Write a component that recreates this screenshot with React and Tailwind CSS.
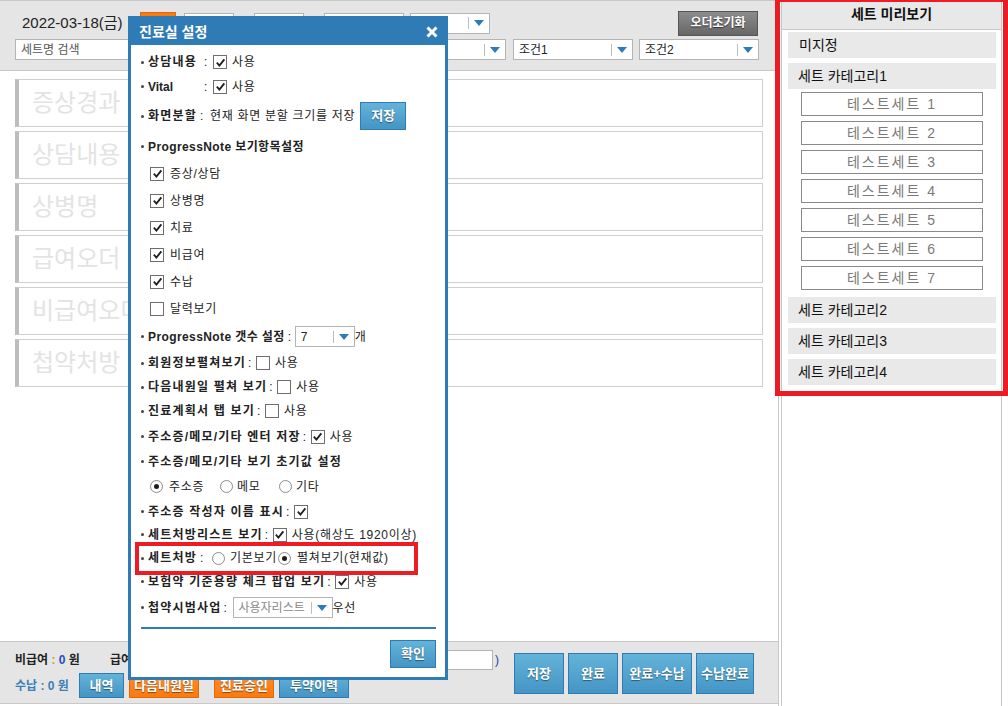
import React from 'react';

const Arrow = () => (
  <svg viewBox="0 0 10 6" className="h-[6px] w-[10px]">
    <polygon points="0,0 10,0 5,6" fill="#2f7bb5" />
  </svg>
);

const Select = ({ text, className = '', textClass = 'text-[#222]' }) => (
  <div className={`flex items-center border border-[#b4b4b4] bg-white ${className}`}>
    <span className={`flex-1 truncate pl-[5px] text-[12px] ${textClass}`}>{text}</span>
    <span className="h-[12px] w-px bg-[#bdbdbd]" />
    <span className="flex w-[20px] justify-center"><Arrow /></span>
  </div>
);

const Check = ({ on }) => (
  <span className="inline-flex h-[14px] w-[14px] shrink-0 items-center justify-center border border-[#6e6e6e] bg-white">
    {on && (
      <svg viewBox="0 0 12 12" className="h-[11px] w-[11px]">
        <path d="M2 6.2 L4.8 9.3 L10.2 2.6" fill="none" stroke="#1e1e1e" strokeWidth="2" />
      </svg>
    )}
  </span>
);

const Radio = ({ on }) => (
  <span className="inline-flex h-[13px] w-[13px] shrink-0 items-center justify-center rounded-full border border-[#8c8c8c] bg-white">
    {on && <span className="h-[5px] w-[5px] rounded-full bg-[#1e1e1e]" />}
  </span>
);

const Dot = () => <span className="mr-[4px] h-[3px] w-[3px] shrink-0 rounded-full bg-[#444]" />;

const Row = ({ h, children, className = '' }) => (
  <div className={`flex items-center text-[12px] tracking-[0.7px] text-[#222] ${className}`} style={{ height: h }}>
    {children}
  </div>
);

// bold Korean label
const L = ({ children, className = '' }) => (
  <span className={`font-bold tracking-[1.2px] ${className}`}>{children}</span>
);

const Colon = ({ className = 'ml-[2px] mr-[4px]' }) => <span className={className}>:</span>;

const blueBtn =
  'flex items-center justify-center border border-[#2f7bb5] bg-linear-to-b from-[#63b3d9] to-[#4595c5] font-bold tracking-normal text-white [text-shadow:0_1px_1px_rgba(0,0,0,0.45)]';
const orangeBtn =
  'flex items-center justify-center border border-[#e26a00] bg-linear-to-b from-[#ff8b2a] to-[#fb7a10] font-bold text-white [text-shadow:0_1px_1px_rgba(0,0,0,0.45)]';

const contentRows = ['증상경과', '상담내용', '상병명', '급여오더', '비급여오더', '첩약처방'];
const sets = [1, 2, 3, 4, 5, 6, 7];

function Dialog() {
  return (
    <div className="absolute left-[128px] top-[16px] flex h-[664px] w-[320px] flex-col border-[3px] border-[#2f7bb5] bg-white">
      <div className="flex h-[26px] items-center justify-between bg-[#2f7bb5] pl-[8px] pr-[7px]">
        <span className="text-[14px] font-bold text-white">진료실 설정</span>
        <svg viewBox="0 0 12 12" className="h-[12px] w-[12px]">
          <path d="M1.5 1.5 L10.5 10.5 M10.5 1.5 L1.5 10.5" stroke="#fff" strokeWidth="3" />
        </svg>
      </div>
      <div className="flex flex-col pl-[10px] pr-[9px] pt-[5px]">
        <Row h={24}>
          <Dot />
          <L className="w-[56px]">상담내용</L>
          <Colon className="mr-[5px]" />
          <Check on />
          <span className="ml-[5px]">사용</span>
        </Row>
        <Row h={25}>
          <Dot />
          <span className="w-[56px] font-bold tracking-normal">Vital</span>
          <Colon className="mr-[5px]" />
          <Check on />
          <span className="ml-[5px]">사용</span>
        </Row>
        <Row h={34}>
          <Dot />
          <L>화면분할</L>
          <Colon className="ml-[3px] mr-[6px]" />
          <span>현재 화면 분할 크기를 저장</span>
          <button className={`${blueBtn} ml-[5px] h-[28px] w-[46px] text-[13px]`}>저장</button>
        </Row>
        <Row h={27}>
          <Dot />
          <span className="font-bold tracking-[0.4px]">ProgressNote 보기항목설정</span>
        </Row>
        {[
          ['증상/상담', true],
          ['상병명', true],
          ['치료', true],
          ['비급여', true],
          ['수납', true],
          ['달력보기', false],
        ].map(([t, on]) => (
          <Row h={27} key={t} className="pl-[9px]">
            <Check on={on} />
            <span className="ml-[6px]">{t}</span>
          </Row>
        ))}
        <Row h={29}>
          <Dot />
          <span className="font-bold tracking-[0.4px]">ProgressNote 갯수 설정</span>
          <Colon className="ml-[3px] mr-[3px]" />
          <Select text="7" className="h-[21px] w-[60px]" />
          <span>개</span>
        </Row>
        {['회원정보펼쳐보기', '다음내원일 펼쳐 보기', '진료계획서 탭 보기'].map((t) => (
          <Row h={24} key={t}>
            <Dot />
            <L>{t}</L>
            <Colon />
            <Check />
            <span className="ml-[5px]">사용</span>
          </Row>
        ))}
        <Row h={27}>
          <Dot />
          <L>주소증/메모/기타 엔터 저장</L>
          <Colon />
          <Check on />
          <span className="ml-[5px]">사용</span>
        </Row>
        <Row h={23}>
          <Dot />
          <L>주소증/메모/기타 보기 초기값 설정</L>
        </Row>
        <Row h={27} className="pl-[9px]">
          <Radio on />
          <span className="ml-[6px] w-[51px]">주소증</span>
          <Radio />
          <span className="ml-[4px] w-[42px]">메모</span>
          <Radio />
          <span className="ml-[4px]">기타</span>
        </Row>
        <Row h={23}>
          <Dot />
          <L>주소증 작성자 이름 표시</L>
          <Colon />
          <Check on />
        </Row>
        <Row h={23}>
          <Dot />
          <L>세트처방리스트 보기</L>
          <Colon />
          <Check on />
          <span className="ml-[5px]">사용(해상도 1920이상)</span>
        </Row>
        <Row h={24} className="relative">
          <div className="pointer-events-none absolute left-[-6px] top-[-4px] h-[33px] w-[283px] border-[4px] border-[#ed1c24]" />
          <Dot />
          <L>세트처방</L>
          <Colon className="ml-[3px] mr-[8px]" />
          <Radio />
          <span className="ml-[5px] w-[48px]">기본보기</span>
          <Radio on />
          <span className="ml-[6px]">펼쳐보기(현재값)</span>
        </Row>
        <Row h={23}>
          <Dot />
          <L>보험약 기준용량 체크 팝업 보기</L>
          <Colon />
          <Check on />
          <span className="ml-[5px]">사용</span>
        </Row>
        <Row h={29}>
          <Dot />
          <L>첩약시범사업</L>
          <Colon className="ml-[2px] mr-[5px]" />
          <Select text="사용자리스트" className="h-[21px] w-[100px] tracking-normal" textClass="text-[#888]" />
          <span>우선</span>
        </Row>
        <div className="mt-[5px] h-[2px] bg-[#2f7bb5]" />
        <div className="mt-[11px] flex justify-end">
          <button className={`${blueBtn} h-[28px] w-[46px] text-[13px]`}>확인</button>
        </div>
      </div>
    </div>
  );
}

export default function App() {
  return (
    <div className="relative flex h-[706px] w-[1008px] overflow-hidden bg-white font-['Liberation_Sans','Noto_Sans_CJK_KR',sans-serif] text-[#222]">
      {/* left work area */}
      <div className="flex w-[779px] flex-col border-r border-[#c8c8c8]">
        <div className="flex h-[71px] flex-col border-y border-[#c8c8c8] bg-[#e5e5e5]">
          <div className="mt-[10px] flex h-[24px] items-center pl-[22px]">
            <span className="w-[118px] text-[15px]">2022-03-18(금)</span>
            <span className="h-[23px] w-[36px] border border-[#e26a00] bg-[#fb7a10]" />
            <span className="ml-[8px] h-[21px] w-[50px] border border-[#b4b4b4] bg-white" />
            <span className="w-[20px] text-center">:</span>
            <span className="h-[21px] w-[50px] border border-[#b4b4b4] bg-white" />
            <span className="w-[20px] text-center">:</span>
            <span className="h-[21px] w-[80px] border border-[#b4b4b4] bg-white" />
            <Select text="" className="ml-[6px] h-[21px] w-[80px]" />
            <button className="ml-auto mr-[20px] h-[25px] w-[80px] border border-[#555] bg-linear-to-b from-[#8c8c8c] to-[#676767] text-[12px] font-bold text-white [text-shadow:0_1px_1px_rgba(0,0,0,0.6)]">
              오더초기화
            </button>
          </div>
          <div className="mt-[4px] flex h-[21px] items-center pl-[15px]">
            <div className="flex h-[21px] w-[365px] items-center border border-[#b4b4b4] bg-white pl-[5px] text-[12px] text-[#555]">
              세트명 검색
            </div>
            <Select text="미지정" className="ml-[6px] h-[21px] w-[120px]" />
            <Select text="조건1" className="ml-[7px] h-[21px] w-[120px]" />
            <Select text="조건2" className="ml-[6px] h-[21px] w-[120px]" />
          </div>
        </div>

        <div className="flex h-[570px] flex-col gap-[4px] px-[15px] pt-[8px]">
          {contentRows.map((t) => (
            <div
              key={t}
              className="flex h-[48px] items-center border border-[#cfcfcf] border-l-[4px] border-l-[#bdbdbd] pl-[13px] text-[24px] text-[#e3e3e3]"
            >
              {t}
            </div>
          ))}
        </div>

        <div className="flex h-[63px] border-y border-[#c8c8c8] bg-[#e5e5e5]">
          <div className="flex flex-col pl-[15px]">
            <div className="mt-[8px] flex h-[19px] items-center text-[12px] font-bold">
              <span className="w-[95px]">
                비급여 <span className="text-[#c9a700]">:</span> <span className="text-[#1f4fbf]">0</span> 원
              </span>
              <span className="w-[330px]">
                급여 <span className="text-[#c9a700]">:</span> <span className="text-[#1f4fbf]">0</span> 원
              </span>
              <span className="h-[20px] w-[53px] border border-[#b4b4b4] bg-white" />
              <span className="ml-[2px] font-normal text-[#1f3f9f]">)</span>
            </div>
            <div className="mt-[4px] flex h-[25px] items-center text-[12px] font-bold">
              <span className="w-[64px] text-[#3a7fb7]">수납 : 0 원</span>
              <button className={`${blueBtn} h-[25px] w-[45px] text-[13px]`}>내역</button>
              <button className={`${orangeBtn} ml-[5px] h-[25px] w-[70px] text-[13px]`}>다음내원일</button>
              <button className={`${orangeBtn} ml-[15px] h-[25px] w-[60px] text-[13px]`}>진료승인</button>
              <button className={`${blueBtn} ml-[5px] h-[25px] w-[70px] text-[13px]`}>투약이력</button>
            </div>
          </div>
          <div className="ml-auto mr-[24px] mt-[11px] flex h-[41px] gap-[4px]">
            <button className={`${blueBtn} w-[50px] text-[13px]`}>저장</button>
            <button className={`${blueBtn} w-[50px] text-[13px]`}>완료</button>
            <button className={`${blueBtn} w-[70px] text-[13px]`}>완료+수납</button>
            <button className={`${blueBtn} w-[58px] text-[13px]`}>수납완료</button>
          </div>
        </div>
      </div>

      {/* set preview panel */}
      <div className="w-[229px] pl-[2px] pr-[6px]">
        <div className="flex h-full flex-col border-x border-[#c8c8c8]">
          <div className="flex h-[30px] items-center justify-center border-b border-[#c8c8c8] bg-[#e8e8e8] text-[14px] font-bold text-[#111]">
            세트 미리보기
          </div>
          <div className="flex flex-col pl-[6px] pr-[5px] pt-[2px] text-[14px] text-[#111]">
            <div className="flex h-[26px] items-center bg-[#e9e9e9] pl-[11px]">미지정</div>
            <div className="mt-[5px] flex h-[26px] items-center bg-[#e9e9e9] pl-[10px]">세트 카테고리1</div>
            <div className="mt-[3px] flex flex-col gap-[5px] pl-[13px] pr-[13px]">
              {sets.map((n) => (
                <div
                  key={n}
                  className="flex h-[24px] items-center justify-center border border-[#8a8a8a] tracking-[2px] text-[#7a7a7a]"
                >
                  테스트세트 {n}
                </div>
              ))}
            </div>
            <div className="mt-[7px] flex h-[26px] items-center bg-[#e9e9e9] pl-[10px]">세트 카테고리2</div>
            <div className="mt-[5px] flex h-[26px] items-center bg-[#e9e9e9] pl-[10px]">세트 카테고리3</div>
            <div className="mt-[5px] flex h-[26px] items-center bg-[#e9e9e9] pl-[10px]">세트 카테고리4</div>
          </div>
        </div>
      </div>

      {/* annotation */}
      <div className="pointer-events-none absolute left-[775px] top-[-3px] h-[399px] w-[233px] border-[5px] border-[#ed1c24]" />

      <Dialog />
    </div>
  );
}
